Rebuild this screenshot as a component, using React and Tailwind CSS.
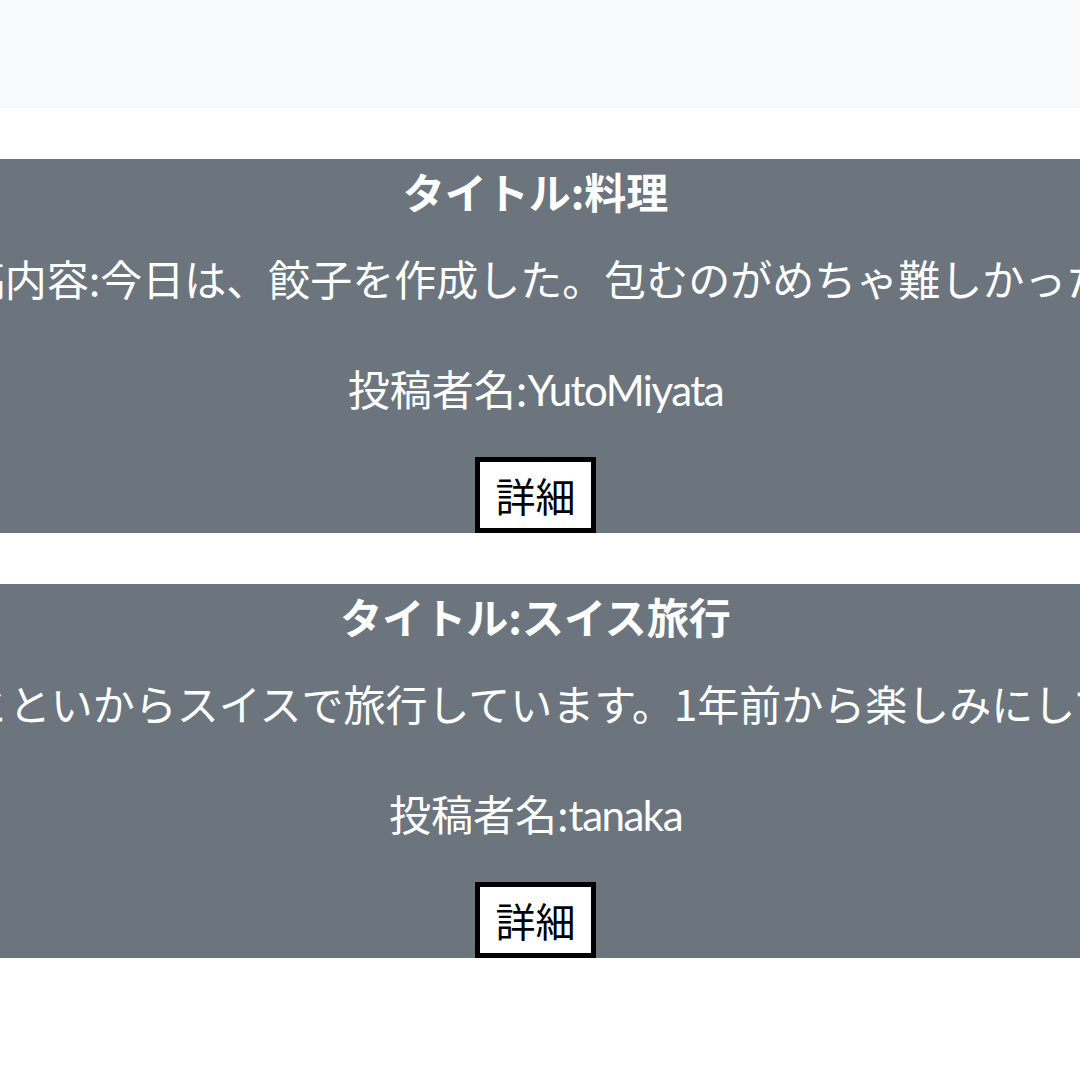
import React from "react";

const posts = [
  {
    title: "タイトル:料理",
    content: "投稿内容:今日は、餃子を作成した。包むのがめちゃ難しかった。",
    author: "投稿者名:",
    name: "YutoMiyata",
  },
  {
    title: "タイトル:スイス旅行",
    content: "投稿内容:おとといからスイスで旅行しています。1年前から楽しみにしていました。",
    author: "投稿者名:",
    name: "tanaka",
  },
];

function Card({ post }) {
  return (
    <div className="flex h-[374px] flex-col items-center overflow-hidden bg-[#6c757d] pr-[9px] text-white">
      <div className="h-[64px] whitespace-nowrap text-[42px] font-bold leading-[64px]">{post.title}</div>
      <div className="mt-[25px] h-[60px] whitespace-nowrap text-[42px] leading-[60px]">{post.content}</div>
      <div className="mt-[50px] h-[60px] whitespace-nowrap text-[42px] leading-[60px]">
        {post.author}
        <span
          className="tracking-[-1.5px]"
          style={{ fontFamily: '"Lato", "Noto Sans CJK JP", sans-serif' }}
        >
          {post.name}
        </span>
      </div>
      <button className="mt-[39px] flex h-[76px] w-[121px] items-center justify-center border-[5px] border-black bg-white text-[40px] leading-none text-black">
        詳細
      </button>
    </div>
  );
}

export default function App() {
  return (
    <div
      className="min-h-[1080px] bg-white"
      style={{ fontFamily: '"Noto Sans CJK JP", "Noto Sans", sans-serif' }}
    >
      <div className="h-[108px] bg-[#f8f9fa]" />
      <div className="mt-[51px] flex flex-col gap-[51px]">
        {posts.map((p, i) => (
          <Card key={i} post={p} />
        ))}
      </div>
    </div>
  );
}
